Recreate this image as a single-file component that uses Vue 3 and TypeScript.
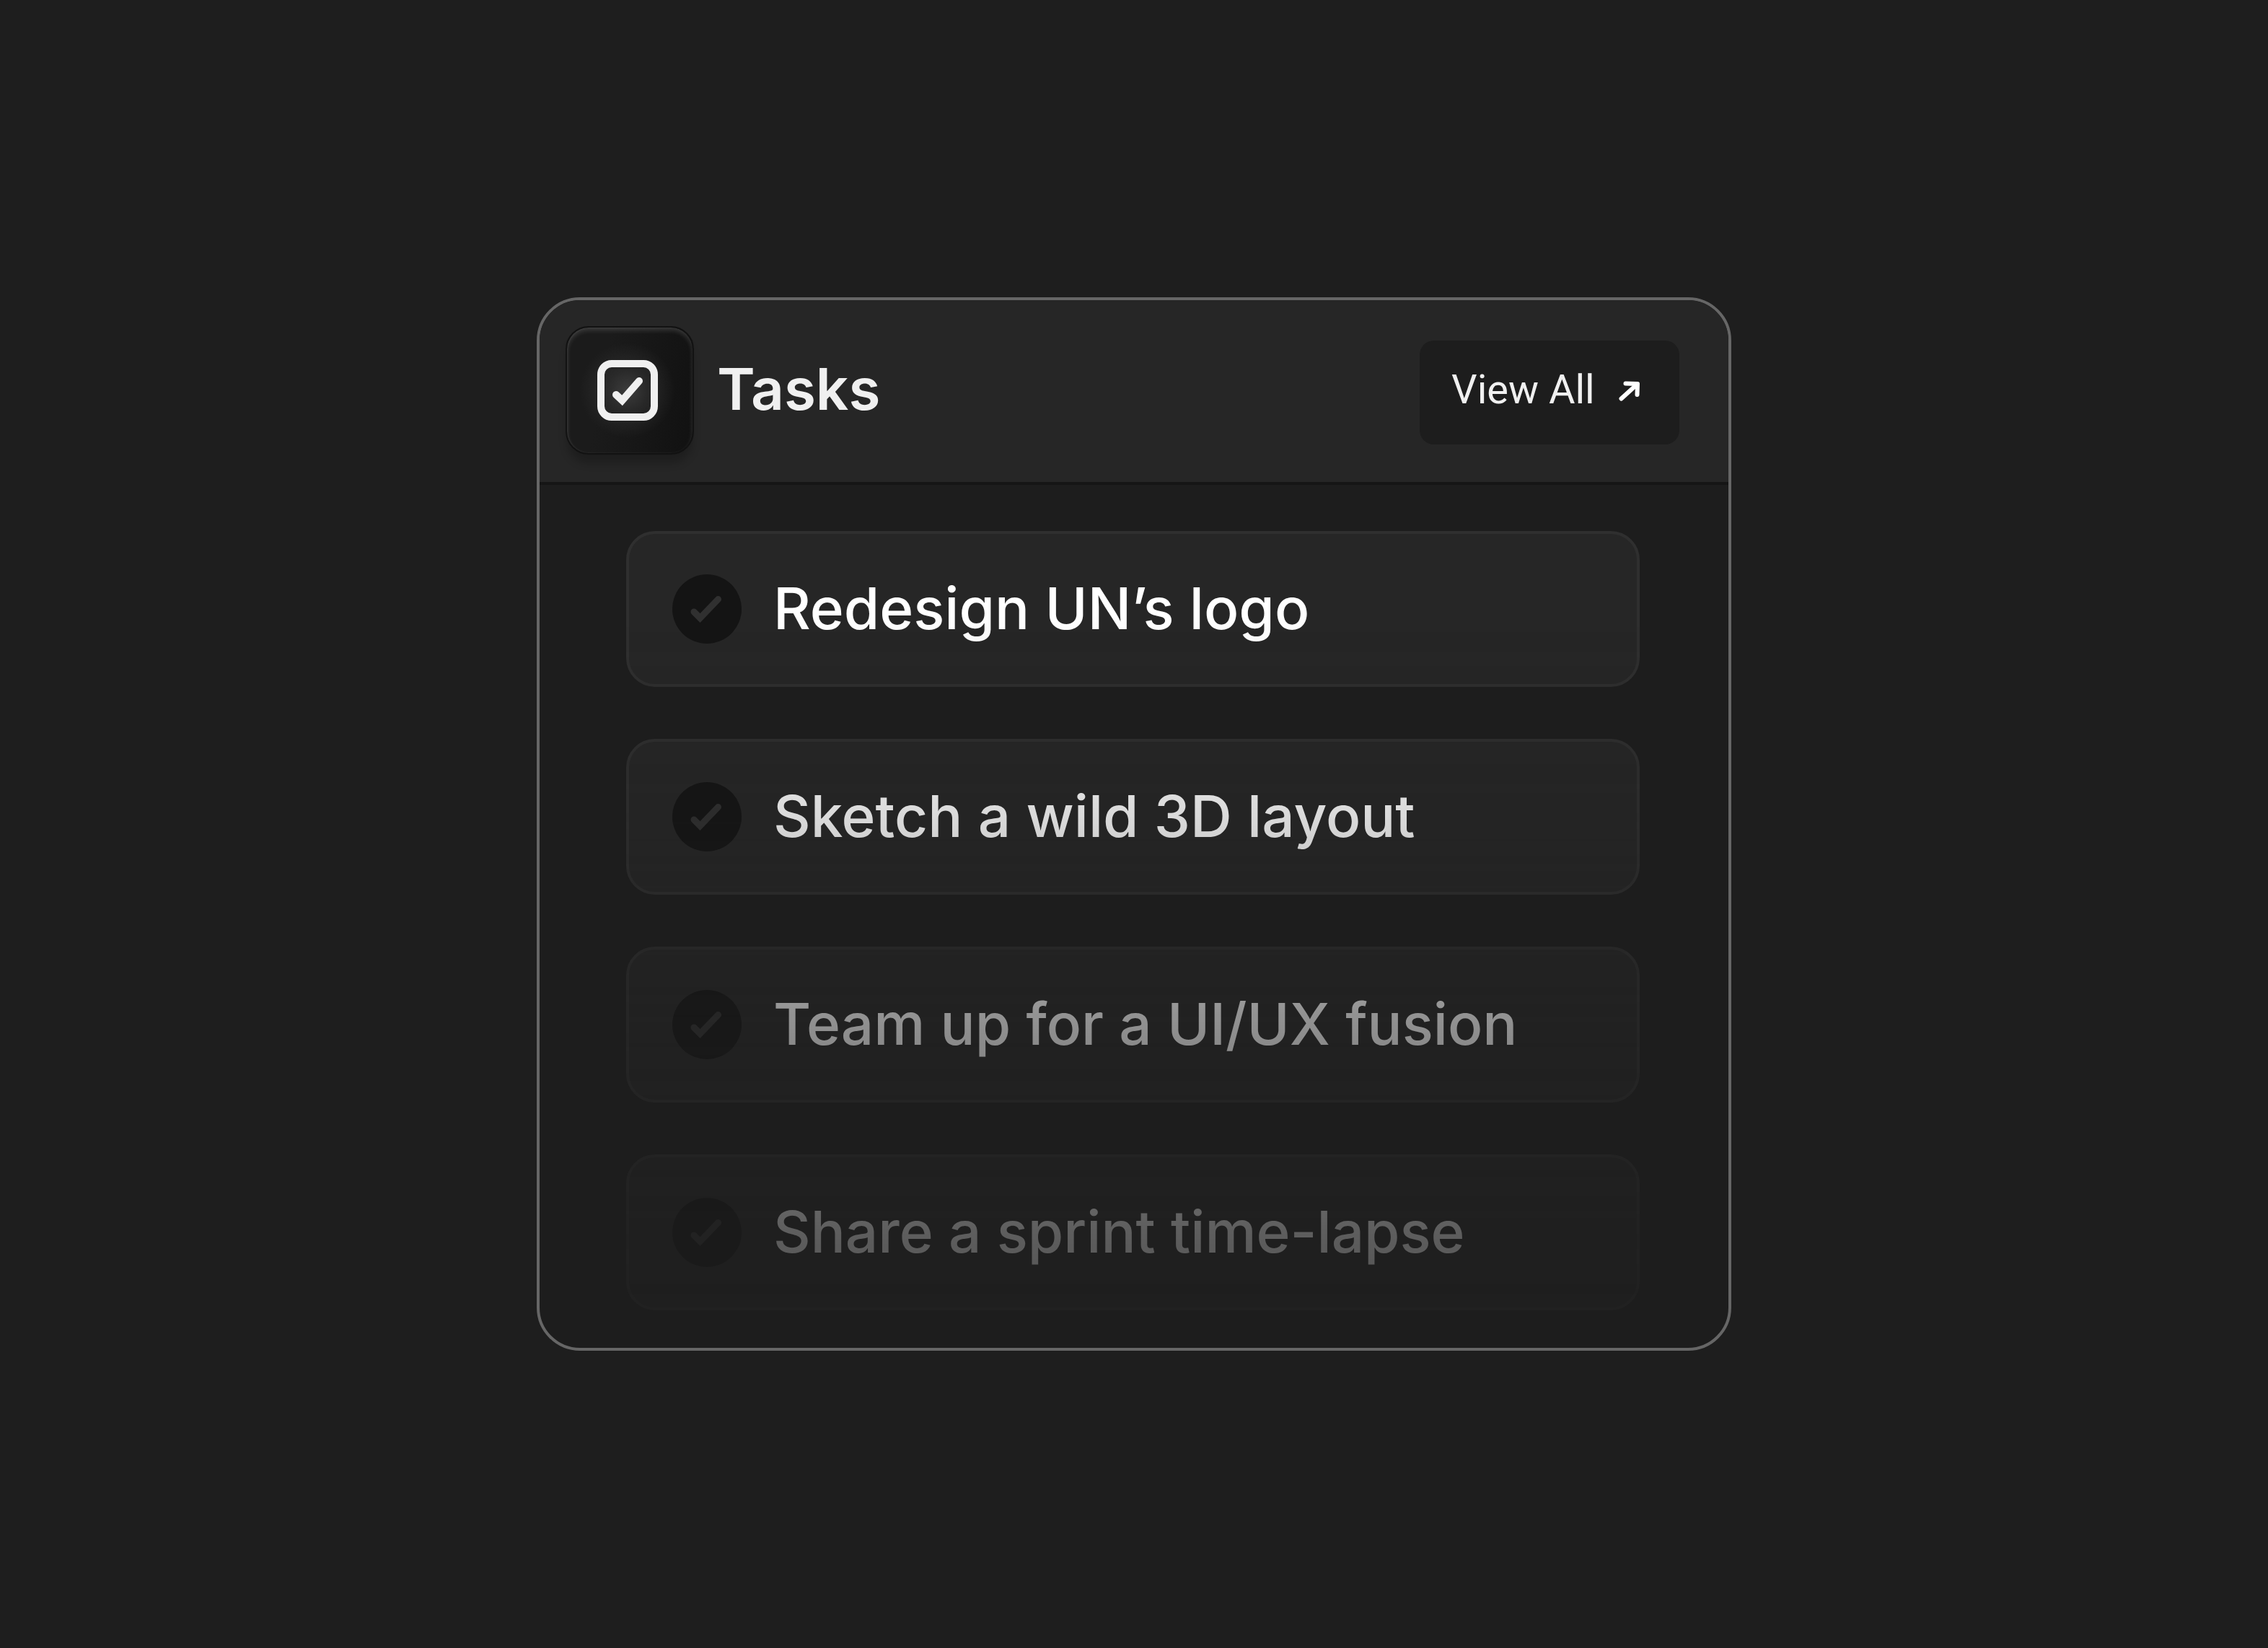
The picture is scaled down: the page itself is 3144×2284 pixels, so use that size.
<script setup lang="ts">
import { ref } from 'vue'

interface Task {
  id: string
  title: string
  done: boolean
}

const tasks = ref<Task[]>([
  { id: 'task-logo', title: 'Redesign UN’s logo', done: false },
  { id: 'task-layout', title: 'Sketch a wild 3D layout', done: false },
  { id: 'task-fusion', title: 'Team up for a UI/UX fusion', done: false },
  { id: 'task-sprint', title: 'Share a sprint time-lapse', done: false },
])
</script>

<template>
  <main class="page">
    <section class="panel" aria-labelledby="panel-title">
      <header class="panel-header">
        <span class="tile" aria-hidden="true">
          <svg class="tile-icon" viewBox="0 0 84 84">
            <rect x="5" y="5" width="74" height="74" rx="15" />
            <path d="M26 48 L34.500 56 L58 29" />
          </svg>
        </span>
        <h1 id="panel-title" class="title">Tasks</h1>
        <button class="view-all" type="button">
          <span>View All</span>
          <svg class="arrow" viewBox="0 0 32 32" aria-hidden="true">
            <path d="M3.500 28.500 L25 9" />
            <path d="M9.500 7.500 L26 8 L25.500 23" />
          </svg>
        </button>
      </header>

      <ul class="list">
        <li v-for="task in tasks" :key="task.id">
          <label class="task" :for="task.id">
            <span class="check">
              <input :id="task.id" v-model="task.done" type="checkbox" />
              <svg viewBox="0 0 96 96" aria-hidden="true">
                <path d="M30 52 L38.500 60.500 L63.500 34.500" />
              </svg>
            </span>
            <span class="label">{{ task.title }}</span>
          </label>
        </li>
      </ul>
    </section>
  </main>
</template>

<style>
body {
  background: #1e1e1e;
}
</style>

<style scoped>
.page {
  display: flex;
  align-items: center;
  justify-content: center;
  min-height: 100vh;
  font-family: Inter, 'Liberation Sans', sans-serif;
  color: #f0f0f0;
}

.panel {
  box-sizing: border-box;
  width: 100%;
  max-width: 1656px;
  border: 4px solid #666;
  border-radius: 60px;
  background: #1d1d1d;
  overflow: hidden;
}

.panel-header {
  display: flex;
  align-items: center;
  padding: 36px 68px 38px 36px;
  border-bottom: 4px solid #151515;
  background: #262626;
}

.tile {
  display: flex;
  align-items: center;
  justify-content: center;
  box-sizing: border-box;
  width: 178px;
  height: 178px;
  padding-right: 6px;
  border: 2px solid #121212;
  border-radius: 32px;
  background:
    radial-gradient(circle at 48% 50%, #3c3c3c 0, rgba(48, 48, 48, 0.7) 28px, rgba(32, 32, 32, 0) 66px),
    linear-gradient(100deg, #1b1b1b 30%, #111 100%);
  box-shadow:
    inset 0 4px 6px rgba(255, 255, 255, 0.14),
    inset 1px 0 3px rgba(255, 255, 255, 0.08),
    0 14px 12px -2px rgba(0, 0, 0, 0.22);
}

.tile-icon {
  width: 84px;
  height: 84px;
  fill: none;
  stroke: #f0f0f0;
  stroke-width: 10;
  stroke-linecap: round;
}

.title {
  margin: 0 auto 0 32px;
  padding-bottom: 4px;
  font-size: 80px;
  font-weight: 600;
  line-height: 96px;
}

.view-all {
  display: flex;
  align-items: center;
  justify-content: space-between;
  box-sizing: border-box;
  width: 360px;
  height: 144px;
  margin-top: 6px;
  padding: 0 52px 8px 44px;
  border: 0;
  border-radius: 20px;
  background: #1d1d1d;
  color: #f0f0f0;
  font-family: Roboto, 'Liberation Sans', sans-serif;
  font-size: 56px;
  line-height: 68px;
  white-space: nowrap;
}

.arrow {
  width: 32px;
  height: 32px;
  fill: none;
  stroke: #fff;
  stroke-width: 6;
  stroke-linecap: round;
  stroke-linejoin: round;
}

.list {
  display: flex;
  flex-direction: column;
  gap: 72px;
  margin: 0;
  padding: 64px 123px 52px 120px;
  list-style: none;
  mask-image: linear-gradient(
    #000 0,
    #000 180px,
    rgba(0, 0, 0, 0.84) 458px,
    rgba(0, 0, 0, 0.51) 746px,
    rgba(0, 0, 0, 0.29) 1034px,
    rgba(0, 0, 0, 0.2) 100%
  );
}

.task {
  display: flex;
  align-items: center;
  gap: 44px;
  box-sizing: border-box;
  height: 216px;
  padding: 0 60px;
  border: 4px solid #2f2f2f;
  border-radius: 40px;
  background: #262626;
}

.check {
  display: grid;
  flex: none;
  width: 96px;
  height: 96px;
}

.check input {
  grid-area: 1 / 1;
  width: 96px;
  height: 96px;
  margin: 0;
  border-radius: 50%;
  background: #141414;
  appearance: none;
}

.check svg {
  grid-area: 1 / 1;
  z-index: 1;
  fill: none;
  stroke: #303030;
  stroke-width: 9;
  stroke-linecap: round;
  pointer-events: none;
}

.check input:checked + svg {
  stroke: #f0f0f0;
}

.label {
  padding-bottom: 2px;
  color: #fff;
  font-size: 80px;
  font-weight: 500;
  line-height: 96px;
}
</style>
